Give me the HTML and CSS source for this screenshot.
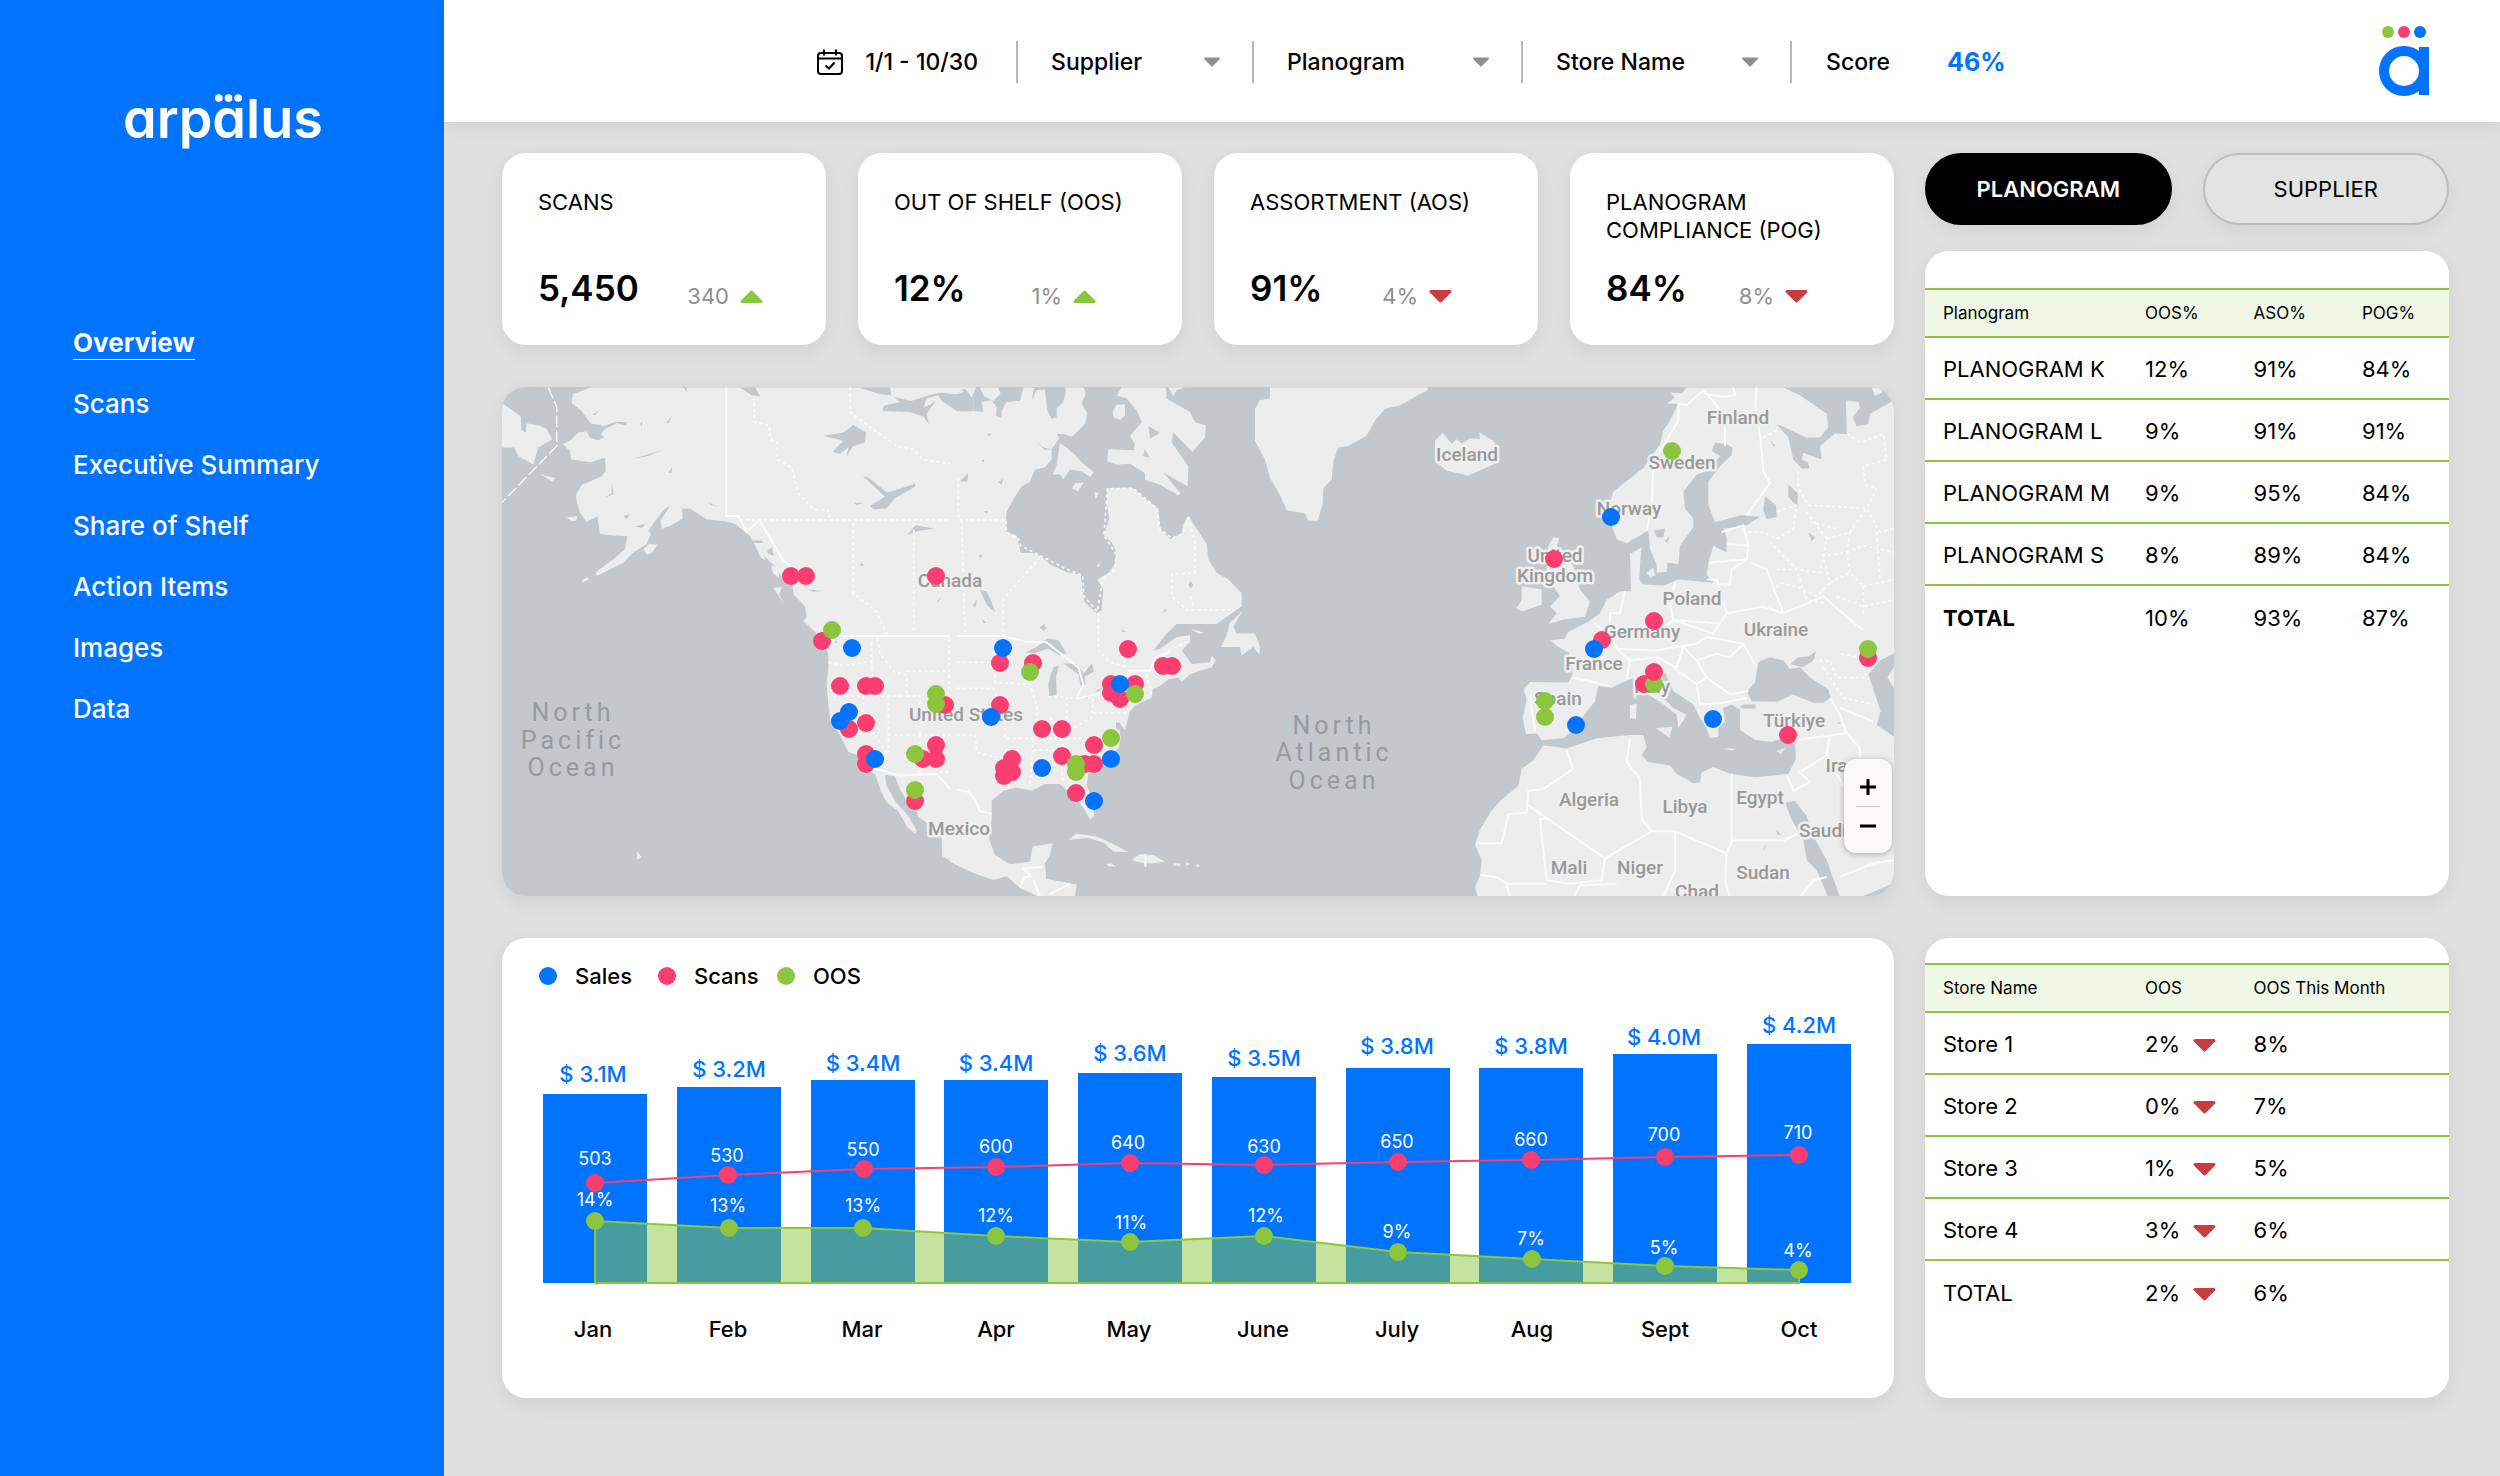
FILE: index.html
```html
<!DOCTYPE html>
<html lang="en">
<head>
<meta charset="utf-8">
<meta name="viewport" content="width=device-width, initial-scale=1">
<title>Arpälus – Overview</title>
<link rel="stylesheet" href="styles.css">
</head>
<body>
<div class="app">
  <aside class="sidebar">
    <a class="wordmark" href="#" aria-label="arpälus">arp<span class="wordmark-a">a<svg class="wordmark-dots" viewBox="0 0 28 8" aria-hidden="true"><circle cx="4" cy="4" r="4"/><circle cx="14" cy="4" r="4"/><circle cx="24" cy="4" r="4"/></svg></span>lus</a>
    <nav class="nav" aria-label="Main">
      <a class="nav-link nav-link-active" href="#" aria-current="page">Overview</a>
      <a class="nav-link" href="#">Scans</a>
      <a class="nav-link" href="#">Executive Summary</a>
      <a class="nav-link" href="#">Share of Shelf</a>
      <a class="nav-link" href="#">Action Items</a>
      <a class="nav-link" href="#">Images</a>
      <a class="nav-link" href="#">Data</a>
    </nav>
  </aside>

  <div class="page">
    <header class="topbar">
      <div class="filters">
        <button class="date" type="button">
          <svg class="date-icon" viewBox="0 0 26 26" aria-hidden="true">
            <rect x="1" y="4" width="24" height="21" rx="3"/>
            <path d="M1 9.500h24M7 0.500v6M19 0.500v6M8.500 16.500l3.500 3 5.500-6"/>
          </svg>
          1/1 - 10/30
        </button>
        <label class="filter filter-short">
          <select aria-label="Supplier"><option>Supplier</option></select>
          <svg class="caret" viewBox="0 0 18 10" aria-hidden="true"><path d="M2 1.500h14L9 8.500z"/></svg>
        </label>
        <label class="filter">
          <select aria-label="Planogram"><option>Planogram</option></select>
          <svg class="caret" viewBox="0 0 18 10" aria-hidden="true"><path d="M2 1.500h14L9 8.500z"/></svg>
        </label>
        <label class="filter">
          <select aria-label="Store Name"><option>Store Name</option></select>
          <svg class="caret" viewBox="0 0 18 10" aria-hidden="true"><path d="M2 1.500h14L9 8.500z"/></svg>
        </label>
        <div class="score"><span>Score</span><strong>46%</strong></div>
      </div>
      <svg class="mark" viewBox="0 0 50 70" role="img" aria-label="Arpälus">
        <circle cx="9" cy="6" r="6" fill="#8cc63f"/>
        <circle cx="25" cy="6" r="6" fill="#fa3e6f"/>
        <circle cx="41" cy="6" r="6" fill="#0073ff"/>
        <circle cx="25" cy="45" r="20" fill="none" stroke="#0073ff" stroke-width="10"/>
        <path d="M40 21h10v48H40z" fill="#0073ff"/>
      </svg>
    </header>

    <main class="board">
      <div class="column">
        <section class="kpis" aria-label="Key figures">
          <article class="card kpi">
            <h2>SCANS</h2>
            <div class="kpi-row kpi-row-wide"><strong>5,450</strong><span class="delta">340<svg class="tri up" viewBox="0 0 23 13" aria-hidden="true"><path d="M2 11.500L11.500 2 21 11.500z"/></svg></span></div>
          </article>
          <article class="card kpi">
            <h2>OUT OF SHELF (OOS)</h2>
            <div class="kpi-row"><strong>12%</strong><span class="delta">1%<svg class="tri up" viewBox="0 0 23 13" aria-hidden="true"><path d="M2 11.500L11.500 2 21 11.500z"/></svg></span></div>
          </article>
          <article class="card kpi">
            <h2>ASSORTMENT (AOS)</h2>
            <div class="kpi-row"><strong>91%</strong><span class="delta">4%<svg class="tri down" viewBox="0 0 23 13" aria-hidden="true"><path d="M2 1.500h19L11.500 11z"/></svg></span></div>
          </article>
          <article class="card kpi">
            <h2>PLANOGRAM COMPLIANCE (POG)</h2>
            <div class="kpi-row"><strong>84%</strong><span class="delta">8%<svg class="tri down" viewBox="0 0 23 13" aria-hidden="true"><path d="M2 1.500h19L11.500 11z"/></svg></span></div>
          </article>
        </section>

        <section class="card map" aria-label="Store map">
          <svg class="map-view" viewBox="0 0 1392 509">
            <!-- Alaska, western Canada and the US west -->
            <g transform="translate(-12 -7) scale(.33333 .33808)">
              <path class="land" d="M302 22L248 42 245 68 275 92 303 130 333 132 345 145 333 160 343 170 325 178 300 170 290 152 265 155 245 175 218 190 240 210 243 235 300 243 345 230 347 270 335 285 290 305 277 308 257 340 262 365 270 392 290 420 322 403 330 455 370 460 412 462 405 500 370 530 318 568 320 580 370 555 400 540 430 510 470 485 483 455 475 445 520 385 542 370 512 415 515 440 540 432 578 410 577 380 600 380 650 412 703 418 735 425 780 462 800 500 850 545 880 590 905 600 912 635 945 670 950 700 940 712 978 748 1000 780 1015 810 1015 850 1010 900 1015 960 1022 1010 1050 1050 1075 1100 1105 1110 1125 1150 1155 1165 1175 1220 1190 1250 1225 1275 1250 1320 1275 1342 1280 1332 1255 1290 1215 1245 1190 1200 1185 1168 1215 1172 1230 1210 1250 1245 1280 1270 1283 1290 1310 1310 1355 1350 1357 1408 1400 1435 1450 1458V22z"/>
              <path class="land" d="M36 68L92 108 95 150 108 155 110 128 150 135 170 145 187 175 145 200 130 250 85 225 72 200 36 200zM150 278L195 290 190 302 170 290zM230 407L262 403 258 416 245 418zM460 500L478 485 503 487 485 512 470 517zM276 592L290 584 299 588 278 600zM441 1393L455 1412 441 1419zM850 615L876 612 868 635 882 662zM845 548L865 557 868 588 848 570zM793 482L815 480 818 510 826 532 812 525z"/>
              <path class="sea" d="M1105 22L1170 42 1205 45 1230 65 1182 76 1176 92 1260 95 1300 108 1316 130 1310 100 1338 60 1322 72 1300 82 1310 55 1345 45 1355 62 1400 92 1450 96V22zM750 22L785 45 810 48 795 22z"/>
              <path class="land" d="M1200 22L1204 48 1262 62 1320 44 1350 38 1400 42 1418 36 1418 22z"/>
              <path class="sea" d="M1000 165L1060 155 1090 133 1128 155 1125 185 1090 195 1070 225 1075 200 1050 218 1027 212 1060 180zM1118 284L1137 290 1190 332 1210 328 1275 306 1275 316 1215 350 1190 380 1150 382 1140 372 1185 345 1160 322zM1090 363L1125 363 1100 369zM1253 458L1275 430 1335 440 1285 446zM1408 295L1440 275V303L1420 305zM1405 510L1414 487 1414 522zM1112 540L1123 549 1112 551zM955 620L998 624 970 626zM430 233L520 206 475 225zM343 348L365 335 365 305 370 338zM436 433L468 425 455 438zM400 402L418 398 410 413zM652 362L690 376 665 370zM335 138L375 124 410 124 408 135 380 128 345 145zM308 102L328 90 315 104zM535 275L546 258 545 276zM450 130L457 122 455 140zM528 128L545 108 536 128zM580 22L592 34 590 22zM785 475H815L820 482 790 482zM832 505L845 495 852 520 835 515zM1338 658L1355 640 1345 656zM1035 766L1043 778 1037 778z"/>
              <path class="border" d="M709 22V402H745L770 450 808 415 880 535 910 560M1045 757H1450M1155 1150L1230 1170 1340 1165 1390 1220 1410 1208 1450 1215"/>
              <path class="dateline" d="M175 22L200 80V195L36 362"/>
              <path class="region" d="M750 414H1450M793 50V125L838 135 842 175 862 185 862 235 905 260 925 335 970 383 1015 385 1020 414M1080 22V95L1120 125 1220 195 1270 205 1300 235 1420 255V414M1090 425V630L1160 685 1190 750M1271 425V750M1418 425L1428 750M1015 835L1060 845 1145 832 1145 765M1145 832L1150 935M1162 765L1170 810 1215 865 1250 872V935M1250 862H1380M1378 765V912H1450M1380 835H1450M1030 935H1250M1120 935V1000L1195 1110M1195 935V1100M1250 935H1290V1050M1195 1050H1450M1290 1050V1165M1397 1055V1160H1345"/>
            </g>
            <!-- eastern Canada, the US east, the Caribbean and Greenland -->
            <g transform="translate(458 -7) scale(.33333 .33808)">
              <path class="land" d="M-30 96L40 92 70 95 65 65 95 60 110 80 108 105 125 112 125 90 140 65 180 62 190 22H222L215 60 230 30 255 28 262 90 275 115 290 110 290 85 310 65 318 35 315 22H370L378 40 365 70 382 100 375 130 350 155 335 168 310 160 290 160 298 172 275 205 275 235 255 258 225 265 210 300 185 315 165 345 140 390 138 410 140 450 170 460 182 512 215 512 240 520 270 545 320 568 362 575 368 620 372 655 410 690 425 680 430 620 412 590 445 570 465 545 468 510 455 480 432 460 448 410 440 370 442 320 520 320 560 355 595 380 600 440 630 470 665 455 668 430 685 402 740 485 745 530 770 570 805 590 845 630 845 670 800 700 770 722H650L620 750 580 800 600 795 650 760 690 755 690 775 665 800 695 840 750 835 755 815 767 830 755 850 690 870 665 893 655 880 625 885 600 905 578 915 575 940 530 960 510 980 495 1035 475 1010 482 1060 475 1090 430 1130 385 1165 380 1200 400 1245 402 1290 390 1300 370 1265 345 1235 300 1195 255 1195 215 1215 170 1205 130 1215 95 1245 95 1300 88 1360 105 1405 150 1432 210 1425 218 1380 278 1370 270 1405 255 1430 258 1475 350 1492 345 1530H240L180 1503 140 1468 100 1478 50 1462-30 1425z"/>
              <path class="land" d="M0 22L20 30 35 52 48 22zM60 22L72 48 100 62 122 40 115 22zM470 45L485 22H618L620 55 690 95 705 125 738 135 735 170 697 213 640 155 635 185 685 255 683 315 612 275 640 310 662 335 655 342 600 310 555 295 555 275 510 248 470 250 442 240 445 205 520 208 525 190 510 165 545 125 530 90 500 55zM458 95L470 73 495 72 495 105 480 118 460 110zM625 22H675L650 30 640 48zM300 187L320 200 345 222 370 248 402 272 390 287 365 270 330 265 310 294 300 278 278 280 290 250zM345 305L372 303 355 328 336 322zM402 333L417 333 407 352zM930 22V55L900 60 885 85V180L915 235 930 290 960 340 980 385 1035 395 1045 415 1073 417 1088 365 1090 320 1115 295 1120 240 1135 200 1165 195 1220 165 1245 120 1275 85 1320 75 1405 28 1400 22zM847 683L820 730 830 750 885 750 900 790 898 812 880 790 845 815 840 790 783 790 800 755 808 720zM690 735L735 748 715 750zM690 845L740 840 720 855zM410 550L422 538 416 555zM325 1360L350 1342 410 1350 455 1370 505 1397 460 1395 430 1368 385 1355zM515 1418L540 1402 580 1405 615 1425 570 1430 530 1425zM438 1432L455 1430 468 1440 448 1438zM640 1430H661V1437H640zM678 1428H688V1435H678zM709 1433H718V1440H709z"/>
              <path class="sea" d="M60 622L80 625 92 650 106 688 80 665zM38 668L50 650 48 670zM65 705L78 718 72 720zM240 732L252 722 260 735 250 742zM484 738L500 745 488 746zM606 688L622 676 615 686zM685 605L692 594 700 606 692 616zM195 805L230 790 262 764 295 770 320 808 300 815 265 795 220 808zM272 870L282 848 297 845 288 880 290 930 268 935 265 900zM310 838L350 840 372 868 395 838 403 862 375 878 376 900 362 905 355 870zM352 938L400 930 380 942zM405 920L430 908 415 922zM565 135L600 157 570 172zM554 205L570 230 550 225zM226 180L250 200 275 205 255 207zM0 300L25 275 22 300zM115 302L129 292 125 310zM55 520L67 515 63 528zM505 85L522 92 510 95zM468 1012L480 1015 478 1038 468 1030zM80 160L95 158 90 166zM62 240L73 234 72 242zM70 387L85 388 80 395z"/>
              <path class="border" d="M-10 757H130L200 775 258 775 355 850 370 900 350 942 430 925M505 860H570L585 820 630 805M-10 1212L25 1218 45 1240 60 1275 95 1283M180 1500L195 1470 215 1470 190 1445 245 1440M220 1480L240 1527M270 1520L330 1490M556 1402V1440"/>
              <path class="region" d="M-5 290V414H138V450L175 470 182 490 245 522 320 560 368 578 372 640 412 685 428 590 465 560 468 515 432 460 442 322 520 320 590 380 600 440 635 468 668 455 685 402 705 480 705 570 635 575 635 640 680 680H820M240 525L155 620 130 650V750M5 414L15 750M415 690V800L450 835 505 850M-10 835H105L100 765M105 835V895L210 900 230 960V1050M-10 912H100L120 960 135 1000V1060H370L480 1050M-10 1050H45L50 1100 100 1115H150L145 1205M220 1060L210 1200M270 1000L320 1040 395 1000 400 940H320V1010M265 938H320M220 1095H300L310 1190M300 1060L330 1130 360 1180M400 985H500M510 860L520 950M560 870L575 930M625 800L690 770M690 640L700 665"/>
            </g>
            <!-- Europe, north Africa and western Asia -->
            <g transform="translate(928 -7) scale(.33333 .33808)">
              <path class="land" d="M770 22L755 40 722 38 735 52 710 70 745 70 720 120 700 150 690 190 640 260 550 330 540 360 535 390 545 430 560 470 590 483 655 445 660 500 680 545 680 570 710 568 712 540 745 545 750 490 790 435 790 410 765 380 760 330 800 280 840 265 870 225 845 210 855 185 890 190 908 200 905 222 870 255 835 300V370L855 420 935 400 990 405 950 430 880 440 890 465 890 510 850 490 835 540 830 575 850 600 745 590 700 608 640 605 628 590 630 545 635 495 600 515 603 625 570 625 530 650 510 690 475 715 415 745 405 765 362 770 385 790 415 805 425 830 428 870 415 895 300 893 280 915 290 945 278 1000 288 1048 320 1045 335 1065 400 1060 425 1040 455 1000 495 950 505 905 545 910 600 885 620 880 640 920 700 960 740 990 745 1030 770 990 730 970 700 940 680 900 705 865 730 920 790 960 810 1000 830 1030 840 1060 865 1055 865 1030 885 1010 880 970 905 960 930 975V1035L975 1065 1025 1070 1060 1060 1095 1075 1098 1120 1075 1165 1030 1170 975 1175 900 1165 850 1145 815 1160 810 1190 790 1193 740 1165 720 1140 655 1130 635 1110 650 1085 640 1050 600 1050 500 1060 410 1090 340 1080 310 1125 275 1150 265 1200 210 1245 180 1280 150 1330 135 1375 155 1420 150 1465 135 1500 143 1530H1392V22z"/>
              <path class="land" d="M355 490L370 465 388 468 380 490 395 510 430 550 450 620 480 655 465 700 405 708 355 722 380 690 360 670 390 640 370 610 350 560zM275 610L335 620V665L275 685 260 675 275 650zM15 180L38 157 65 188 80 175 95 188 120 172 150 175 148 155 190 180 208 215 190 250 115 283 50 268 15 240zM600 962L620 957 618 1003 600 1000zM612 915L622 915 618 945 610 940zM678 1030L728 1026 718 1057zM880 1090L920 1091 905 1096zM1040 1098L1068 1087 1052 1106zM650 570L670 555 675 578 660 582z"/>
              <path class="sea" d="M985 835L1020 820 1060 830 1080 855 1110 850 1140 880 1195 915 1202 940 1180 955 1150 955 1090 930 1040 952 965 950 950 920 975 895zM1080 840L1105 820 1135 818 1158 803 1150 830 1118 850zM930 965L945 960H977V972H935zM1392 808L1350 830 1315 870 1335 930 1352 980 1340 1020 1392 1055zM1065 1250L1095 1245 1130 1290 1150 1350 1190 1420 1230 1530H1195L1160 1450 1130 1420 1120 1360 1085 1300zM1392 1488L1340 1510 1290 1530H1392zM1060 22L1110 45 1190 100 1195 140 1170 170 1130 170 1040 130 1075 170 1090 235 1115 262 1138 260 1135 245 1115 235 1120 215 1175 235 1170 195 1215 158 1250 160 1248 60 1285 65 1290 82 1268 110 1280 137 1315 130 1320 100 1392 60V22zM1005 345L1038 370 1040 405 1010 412 1000 385zM1075 308L1103 335V375L1075 345zM672 445L705 440 700 465 680 465zM705 475L718 463 712 483zM1135 450L1155 465 1145 478zM1020 180L1038 195 1030 195zM1220 1015L1238 1008 1225 1018zM1040 1330L1052 1345 1042 1345zM1000 1395L1010 1372 1003 1380z"/>
              <path class="land" d="M1325 22L1335 47 1356 38V22zM1372 880L1392 850V910z"/>
              <path class="border" d="M820 30L770 75 745 70 745 120 715 170 670 240 665 380 650 445M820 30L860 75 885 110 885 195M820 40L880 50 915 45 910 22M980 22L975 90 990 160 1000 270 1020 305 950 400M875 450L940 430 955 490 890 485M955 490L950 530 840 540M950 530L905 560 900 605 865 605M830 590H860L890 690 870 720 730 710 720 660 735 600M890 690L1000 670 1060 690 1180 640 1250 700 1300 740M1060 690L1010 560 960 540M870 720L850 750 730 710 690 745 740 790 800 780 830 760 940 780 980 850M740 790L680 800 560 795 540 750 490 720M560 795L600 830 680 820 740 850 760 790 800 830 830 880 800 900 730 850M830 880L900 930 955 920M800 900L810 960 880 955 950 940M940 780L900 820 860 810 800 830M430 880L540 905M600 830L590 885M585 625L570 690 540 690 540 750M300 935L330 925M300 935L315 1040M410 1095L430 1150 340 1210 295 1215 290 1280 235 1285 215 1370H140M295 1258L525 1415 665 1335 735 1335 890 1400 905 1365 905 1165M600 1060L590 1130 630 1180 635 1300 665 1335M905 1362H1060L1110 1340M525 1415L515 1480 420 1490 350 1480 330 1300 350 1295M735 1335L735 1450 700 1530M890 1400L885 1480 900 1530M150 1465L200 1470 230 1490H350M230 1490L240 1530M430 1530L450 1495 560 1490M1100 1065L1250 1045 1290 1090 1290 1150M1250 1045L1230 990 1200 940M1200 1050L1190 1110 1110 1160 1140 1190 1090 1215 1070 1170M1190 1110L1240 1200M1110 1530L1150 1480 1190 1470M1230 1470L1330 1430 1392 1420M1230 970L1330 1010"/>
              <path class="region" d="M955 450L1000 450 1040 470 1090 440 1100 370 1040 390M1105 270V320L1135 370 1310 380 1340 320 1305 310 1300 255 1370 235 1360 160 1290 185 1255 160M1130 390L1190 470 1170 570 1100 560 1020 480M1190 470L1260 450 1310 380 1350 450 1392 440M1260 450L1250 510 1180 520 1200 600 1160 640 1100 610 1050 600 1020 640M1250 510L1300 490 1392 510M1200 600L1260 570 1300 610 1392 590M1260 570L1250 510M1040 560L1100 560 1130 650 1180 660M1220 640L1300 670 1392 650M1140 420L1220 440M1150 830L1200 830 1220 880 1310 880 1290 820 1230 810M1180 850L1240 940 1330 960M1000 170L1040 150M1300 610V700M1340 450L1350 590"/>
            </g>
            <g class="ocean-label">
              <text x="71" y="334">North</text><text x="71" y="362">Pacific</text><text x="71" y="389">Ocean</text>
              <text x="832" y="347">North</text><text x="832" y="374">Atlantic</text><text x="832" y="402">Ocean</text>
            </g>
            <g class="country-label">
              <text x="448" y="200">Canada</text><text x="464" y="334">United States</text><text x="457" y="448">Mexico</text>
              <text x="965" y="74">Iceland</text><text x="1236" y="37">Finland</text><text x="1180" y="82">Sweden</text>
              <text x="1127" y="128">Norway</text><text x="1053" y="175">United</text><text x="1053" y="195">Kingdom</text>
              <text x="1190" y="218">Poland</text><text x="1140" y="251">Germany</text><text x="1274" y="249">Ukraine</text>
              <text x="1092" y="283">France</text><text x="1150" y="306">Italy</text><text x="1056" y="318">Spain</text>
              <text x="1292" y="340">Türkiye</text><text x="1340" y="385">Iraq</text><text x="1087" y="419">Algeria</text>
              <text x="1183" y="426">Libya</text><text x="1258" y="417">Egypt</text><text x="1321" y="450">Saudi</text>
              <text x="1067" y="487">Mali</text><text x="1138" y="487">Niger</text><text x="1195" y="511">Chad</text><text x="1261" y="492">Sudan</text>
            </g>
            <g class="pin-scans">
              <circle cx="289" cy="189" r="9"/><circle cx="304" cy="189" r="9"/><circle cx="434" cy="189" r="9"/><circle cx="320" cy="254" r="9"/>
              <circle cx="338" cy="299" r="9"/><circle cx="364" cy="299" r="9"/><circle cx="373" cy="299" r="9"/><circle cx="443" cy="318" r="9"/>
              <circle cx="347" cy="342" r="9"/><circle cx="364" cy="336" r="9"/><circle cx="364" cy="367" r="9"/><circle cx="364" cy="377" r="9"/>
              <circle cx="421" cy="372" r="9"/><circle cx="434" cy="358" r="9"/><circle cx="434" cy="372" r="9"/><circle cx="413" cy="414" r="9"/>
              <circle cx="498" cy="276" r="9"/><circle cx="531" cy="276" r="9"/><circle cx="498" cy="318" r="9"/><circle cx="626" cy="262" r="9"/>
              <circle cx="661" cy="279" r="9"/><circle cx="670" cy="279" r="9"/><circle cx="609" cy="297" r="9"/><circle cx="609" cy="306" r="9"/>
              <circle cx="618" cy="312" r="9"/><circle cx="633" cy="297" r="9"/><circle cx="540" cy="342" r="9"/><circle cx="560" cy="342" r="9"/>
              <circle cx="592" cy="358" r="9"/><circle cx="560" cy="369" r="9"/><circle cx="592" cy="377" r="9"/><circle cx="583" cy="377" r="9"/>
              <circle cx="510" cy="372" r="9"/><circle cx="502" cy="381" r="9"/><circle cx="510" cy="385" r="9"/><circle cx="502" cy="389" r="9"/>
              <circle cx="574" cy="406" r="9"/><circle cx="1052" cy="172" r="9"/><circle cx="1152" cy="234" r="9"/><circle cx="1100" cy="253" r="9"/>
              <circle cx="1142" cy="297" r="9"/><circle cx="1286" cy="348" r="9"/><circle cx="1366" cy="271" r="9"/>
            </g>
            <g class="pin-oos">
              <circle cx="330" cy="243" r="9"/><circle cx="434" cy="307" r="9"/><circle cx="434" cy="317" r="9"/><circle cx="413" cy="367" r="9"/>
              <circle cx="413" cy="403" r="9"/><circle cx="528" cy="285" r="9"/><circle cx="633" cy="307" r="9"/><circle cx="609" cy="351" r="9"/>
              <circle cx="574" cy="377" r="9"/><circle cx="574" cy="385" r="9"/><circle cx="1170" cy="64" r="9"/><circle cx="1152" cy="297" r="9"/>
              <circle cx="1043" cy="314" r="9"/><circle cx="1043" cy="330" r="9"/><circle cx="1366" cy="262" r="9"/>
            </g>
            <g class="pin-sales">
              <circle cx="350" cy="261" r="9"/><circle cx="347" cy="325" r="9"/><circle cx="338" cy="334" r="9"/><circle cx="373" cy="372" r="9"/>
              <circle cx="501" cy="261" r="9"/><circle cx="489" cy="330" r="9"/><circle cx="618" cy="297" r="9"/><circle cx="609" cy="372" r="9"/>
              <circle cx="540" cy="381" r="9"/><circle cx="592" cy="414" r="9"/><circle cx="1109" cy="130" r="9"/><circle cx="1092" cy="262" r="9"/>
              <circle cx="1074" cy="338" r="9"/><circle cx="1211" cy="332" r="9"/>
            </g>
            <circle class="pin-scans" cx="1152" cy="285" r="9"/>
          </svg>
          <div class="zoom">
            <button type="button" aria-label="Zoom in"><svg viewBox="0 0 18 18" aria-hidden="true"><path d="M1 9h16M9 1v16"/></svg></button>
            <button type="button" aria-label="Zoom out"><svg viewBox="0 0 18 18" aria-hidden="true"><path d="M1 9h16"/></svg></button>
          </div>
        </section>
      </div>

      <div class="column side">
        <div class="tabs">
          <button class="tab tab-active" type="button" aria-pressed="true">PLANOGRAM</button>
          <button class="tab" type="button" aria-pressed="false">SUPPLIER</button>
        </div>
        <section class="card list list-roomy">
          <table>
            <thead><tr><th>Planogram</th><th>OOS%</th><th>ASO%</th><th>POG%</th></tr></thead>
            <tbody>
              <tr><td>PLANOGRAM K</td><td>12%</td><td>91%</td><td>84%</td></tr>
              <tr><td>PLANOGRAM L</td><td>9%</td><td>91%</td><td>91%</td></tr>
              <tr><td>PLANOGRAM M</td><td>9%</td><td>95%</td><td>84%</td></tr>
              <tr><td>PLANOGRAM S</td><td>8%</td><td>89%</td><td>84%</td></tr>
              <tr><td><b>TOTAL</b></td><td>10%</td><td>93%</td><td>87%</td></tr>
            </tbody>
          </table>
        </section>
      </div>

      <section class="card chart" aria-label="Sales, scans and OOS by month">
        <ul class="legend">
          <li><i class="dot dot-sales"></i>Sales</li>
          <li><i class="dot dot-scans"></i>Scans</li>
          <li><i class="dot dot-oos"></i>OOS</li>
        </ul>
        <svg class="plot" viewBox="0 0 1392 398">
          <g class="bars">
            <rect x="41" y="94" width="104" height="189"/><rect x="175" y="87" width="104" height="196"/>
            <rect x="309" y="80" width="104" height="203"/><rect x="442" y="80" width="104" height="203"/>
            <rect x="576" y="73" width="104" height="210"/><rect x="710" y="77" width="104" height="206"/>
            <rect x="844" y="68" width="104" height="215"/><rect x="977" y="68" width="104" height="215"/>
            <rect x="1111" y="54" width="104" height="229"/><rect x="1245" y="44" width="104" height="239"/>
          </g>
          <path class="area" d="M93 221L227 228 361 228 494 236 628 242 762 236 896 252 1030 259 1163 266 1297 270V283H93z"/>
          <path class="line" d="M93 183L227 175 361 169 494 167 628 163 762 165 896 162 1029 160 1163 157 1297 155"/>
          <g class="pin-oos">
            <circle cx="93" cy="221" r="9"/><circle cx="227" cy="228" r="9"/><circle cx="361" cy="228" r="9"/><circle cx="494" cy="236" r="9"/><circle cx="628" cy="242" r="9"/>
            <circle cx="762" cy="236" r="9"/><circle cx="896" cy="252" r="9"/><circle cx="1030" cy="259" r="9"/><circle cx="1163" cy="266" r="9"/><circle cx="1297" cy="270" r="9"/>
          </g>
          <g class="pin-scans">
            <circle cx="93" cy="183" r="9"/><circle cx="226" cy="175" r="9"/><circle cx="362" cy="169" r="9"/><circle cx="494" cy="167" r="9"/><circle cx="628" cy="163" r="9"/>
            <circle cx="762" cy="165" r="9"/><circle cx="896" cy="162" r="9"/><circle cx="1029" cy="160" r="9"/><circle cx="1163" cy="157" r="9"/><circle cx="1297" cy="155" r="9"/>
          </g>
          <g class="sales-text">
            <text x="91" y="82">$ 3.1M</text><text x="227" y="77">$ 3.2M</text><text x="361" y="71">$ 3.4M</text><text x="494" y="71">$ 3.4M</text><text x="628" y="61">$ 3.6M</text>
            <text x="762" y="66">$ 3.5M</text><text x="895" y="54">$ 3.8M</text><text x="1029" y="54">$ 3.8M</text><text x="1162" y="45">$ 4.0M</text><text x="1297" y="33">$ 4.2M</text>
          </g>
          <g class="point-text">
            <text x="93" y="165">503</text><text x="225" y="162">530</text><text x="361" y="156">550</text><text x="494" y="153">600</text><text x="626" y="149">640</text>
            <text x="762" y="153">630</text><text x="895" y="148">650</text><text x="1029" y="146">660</text><text x="1162" y="141">700</text><text x="1296" y="139">710</text>
            <text x="93" y="206">14%</text><text x="226" y="212">13%</text><text x="361" y="212">13%</text><text x="494" y="222">12%</text><text x="629" y="229">11%</text>
            <text x="764" y="222">12%</text><text x="895" y="238">9%</text><text x="1029" y="245">7%</text><text x="1162" y="254">5%</text><text x="1296" y="257">4%</text>
          </g>
          <g class="month-text">
            <text x="91" y="337">Jan</text><text x="226" y="337">Feb</text><text x="360" y="337">Mar</text><text x="494" y="337">Apr</text><text x="627" y="337">May</text>
            <text x="761" y="337">June</text><text x="895" y="337">July</text><text x="1030" y="337">Aug</text><text x="1163" y="337">Sept</text><text x="1297" y="337">Oct</text>
          </g>
        </svg>
      </section>

      <section class="card list">
        <table>
          <thead><tr><th>Store Name</th><th>OOS</th><th colspan="2">OOS This Month</th></tr></thead>
          <tbody>
            <tr><td>Store 1</td><td><span class="trend">2%</span><svg class="tri down" viewBox="0 0 23 13" aria-label="down"><path d="M2 1.500h19L11.500 11z"/></svg></td><td colspan="2">8%</td></tr>
            <tr><td>Store 2</td><td><span class="trend">0%</span><svg class="tri down" viewBox="0 0 23 13" aria-label="down"><path d="M2 1.500h19L11.500 11z"/></svg></td><td colspan="2">7%</td></tr>
            <tr><td>Store 3</td><td><span class="trend">1%</span><svg class="tri down" viewBox="0 0 23 13" aria-label="down"><path d="M2 1.500h19L11.500 11z"/></svg></td><td colspan="2">5%</td></tr>
            <tr><td>Store 4</td><td><span class="trend">3%</span><svg class="tri down" viewBox="0 0 23 13" aria-label="down"><path d="M2 1.500h19L11.500 11z"/></svg></td><td colspan="2">6%</td></tr>
            <tr><td>TOTAL</td><td><span class="trend">2%</span><svg class="tri down" viewBox="0 0 23 13" aria-label="down"><path d="M2 1.500h19L11.500 11z"/></svg></td><td colspan="2">6%</td></tr>
          </tbody>
        </table>
      </section>
    </main>
  </div>
</div>
</body>
</html>
```
FILE: styles.css
```css
:root {
  --blue: #0073ff;
  --pink: #fa3e6f;
  --green: #8cc63f;
  --red: #c93c3f;
}

* { box-sizing: border-box; }

body {
  margin: 0;
  background: #e0e0e0;
  color: #000;
  font: 400 22px/28px Inter, "Liberation Sans", sans-serif;
}

button, select { font: inherit; color: inherit; }
a { color: inherit; text-decoration: none; }
svg { display: block; }

.app { display: flex; min-height: 100vh; }

/* Sidebar */
.sidebar {
  flex: none;
  width: 444px;
  padding: 87px 73px;
  background: var(--blue);
  color: #fff;
}
.wordmark {
  display: block;
  margin-left: 50px;
  font-size: 54px;
  line-height: 64px;
  font-weight: 600;
  font-feature-settings: "cv11";
}
.wordmark-a { position: relative; }
.wordmark-dots {
  position: absolute;
  left: 3px;
  top: 8px;
  width: 27px;
  height: 8px;
  fill: #fff;
}
.nav {
  display: flex;
  flex-direction: column;
  align-items: flex-start;
  gap: 29px;
  margin-top: 176px;
  font-size: 26px;
  line-height: 32px;
  font-weight: 500;
}
.nav-link-active {
  font-weight: 700;
  box-shadow: 0 1px 0 #fff;
}

/* Top bar */
.page { flex: 1; min-width: 0; }
.topbar {
  position: relative;
  display: flex;
  align-items: center;
  height: 122px;
  padding-right: 71px;
  background: #fff;
  box-shadow: 0 4px 16px rgba(0, 0, 0, .08);
  font-size: 23px;
  font-weight: 500;
}
.filters { display: flex; align-items: center; margin: 0 auto; padding-top: 2px; }
.date {
  display: flex;
  align-items: center;
  gap: 22px;
  padding: 0 38px 0 0;
  border: 0;
  background: none;
}
.date-icon {
  width: 26px;
  height: 26px;
  fill: none;
  stroke: #000;
  stroke-width: 2;
}
.filter, .score {
  display: flex;
  align-items: center;
  height: 42px;
  border-left: 2px solid #b8b8b8;
}
.filter { position: relative; width: 269px; padding: 0 31px 0 33px; }
.filter-short { width: 236px; }
.filter select {
  width: 100%;
  padding: 0;
  border: 0;
  background: none;
  appearance: none;
}
.caret {
  position: absolute;
  right: 31px;
  width: 18px;
  height: 10px;
  pointer-events: none;
  fill: #8f8f8f;
  stroke: #8f8f8f;
  stroke-width: 2;
  stroke-linejoin: round;
}
.score { gap: 57px; padding-left: 34px; }
.score strong { font-size: 25px; font-weight: 700; color: var(--blue); }
.mark { width: 50px; height: 70px; }

/* Board */
.board {
  display: grid;
  grid-template-columns: minmax(0, 1392fr) minmax(0, 524fr);
  gap: 42px 31px;
  padding: 31px 51px 77px 58px;
}
.column { display: flex; flex-direction: column; gap: 42px; }
.side { gap: 26px; }
.card {
  border-radius: 24px;
  background: #fff;
  box-shadow: 0 6px 20px rgba(0, 0, 0, .07);
}

/* Key figures */
.kpis { display: grid; grid-template-columns: repeat(4, minmax(0, 1fr)); gap: 32px; }
.kpi {
  display: flex;
  flex-direction: column;
  justify-content: space-between;
  height: 192px;
  padding: 35px 36px;
}
.kpi h2 { margin: 0; font-size: 22px; line-height: 28px; font-weight: 400; }
.kpi-row {
  display: flex;
  justify-content: space-between;
  align-items: flex-end;
  max-width: 202px;
}
.kpi-row-wide { max-width: 225px; }
.kpi-row strong { font-size: 35px; line-height: 44px; font-weight: 600; }
.delta { display: flex; align-items: center; gap: 11px; color: #8f8f8f; }

.tri { width: 23px; height: 13px; stroke-width: 3; stroke-linejoin: round; }
.up { fill: var(--green); stroke: var(--green); }
.down { fill: var(--red); stroke: var(--red); }

/* Map */
.map { position: relative; overflow: hidden; background: #c3c8cc; }
.map-view { width: 100%; height: auto; }
.land { fill: #ededed; }
.sea { fill: #c3c8cc; }
.border, .region, .dateline { fill: none; stroke: #fbfbfb; stroke-width: 6; stroke-linejoin: round; }
.region { stroke-dasharray: 9 9; stroke-width: 5; }
.dateline { stroke-dasharray: 34 10; stroke-width: 4; }
.country-label {
  font: 500 19px Roboto, sans-serif;
  fill: #999;
  stroke: #efefef;
  stroke-width: 5;
  stroke-linejoin: round;
  paint-order: stroke;
  text-anchor: middle;
}
.ocean-label {
  font: 400 25px Roboto, sans-serif;
  letter-spacing: 4px;
  fill: #979b9e;
  text-anchor: middle;
}
.pin-scans { fill: var(--pink); }
.pin-oos { fill: var(--green); }
.pin-sales { fill: var(--blue); }
.zoom {
  position: absolute;
  right: 2px;
  bottom: 43px;
  width: 48px;
  padding: 8px 12px;
  border-radius: 12px;
  background: #faf8f9;
  box-shadow: 0 1px 6px rgba(0, 0, 0, .3);
}
.zoom button {
  display: grid;
  place-items: center;
  width: 24px;
  height: 39px;
  padding: 0;
  border: 0;
  background: none;
}
.zoom button + button { border-top: 1px solid #ccc; }
.zoom svg { width: 18px; height: 18px; fill: none; stroke: #000; stroke-width: 3; }

/* Tabs */
.tabs { display: grid; grid-template-columns: 1fr 1fr; gap: 31px; }
.tab {
  height: 72px;
  border: 2px solid #bdbdbd;
  border-radius: 36px;
  background: #e3e3e3;
  box-shadow: 0 6px 20px rgba(0, 0, 0, .06);
}
.tab-active { border-color: #000; background: #000; color: #fff; font-weight: 600; }

/* Tables */
.list { padding-top: 25px; }
.list-roomy { flex: 1; padding-top: 37px; }
.list table { width: 100%; border-collapse: collapse; table-layout: fixed; }
.list th, .list td { padding: 0; text-align: left; border-bottom: 2px solid var(--green); }
.list th {
  width: 20.7%;
  height: 48px;
  border-top: 2px solid var(--green);
  background: #eff8e6;
  font-size: 17px;
  font-weight: 400;
}
.list th:first-child { width: 42%; }
.list th:last-child { width: auto; }
.list td { height: 62px; padding-top: 2px; }
.list th:first-child, .list td:first-child { padding-left: 18px; }
.list tr:last-child td { border-bottom: 0; }
.trend { display: inline-block; width: 48px; }
.list .tri { display: inline-block; }

/* Chart */
.chart { padding-top: 24px; }
.legend {
  display: flex;
  margin: 0;
  padding: 0 0 10px 37px;
  list-style: none;
  font-weight: 500;
}
.legend li { display: flex; align-items: center; gap: 18px; width: 119px; }
.dot { width: 18px; height: 18px; border-radius: 50%; }
.dot-sales { background: var(--blue); }
.dot-scans { background: var(--pink); }
.dot-oos { background: var(--green); }
.plot { width: 100%; height: auto; text-anchor: middle; }
.bars { fill: var(--blue); }
.area { fill: var(--green); fill-opacity: .5; stroke: var(--green); stroke-width: 2; }
.line { fill: none; stroke: var(--pink); stroke-width: 2; }
.sales-text { fill: var(--blue); font-weight: 500; }
.point-text { fill: #fff; font-size: 18px; }
.month-text { font-weight: 500; }
```
